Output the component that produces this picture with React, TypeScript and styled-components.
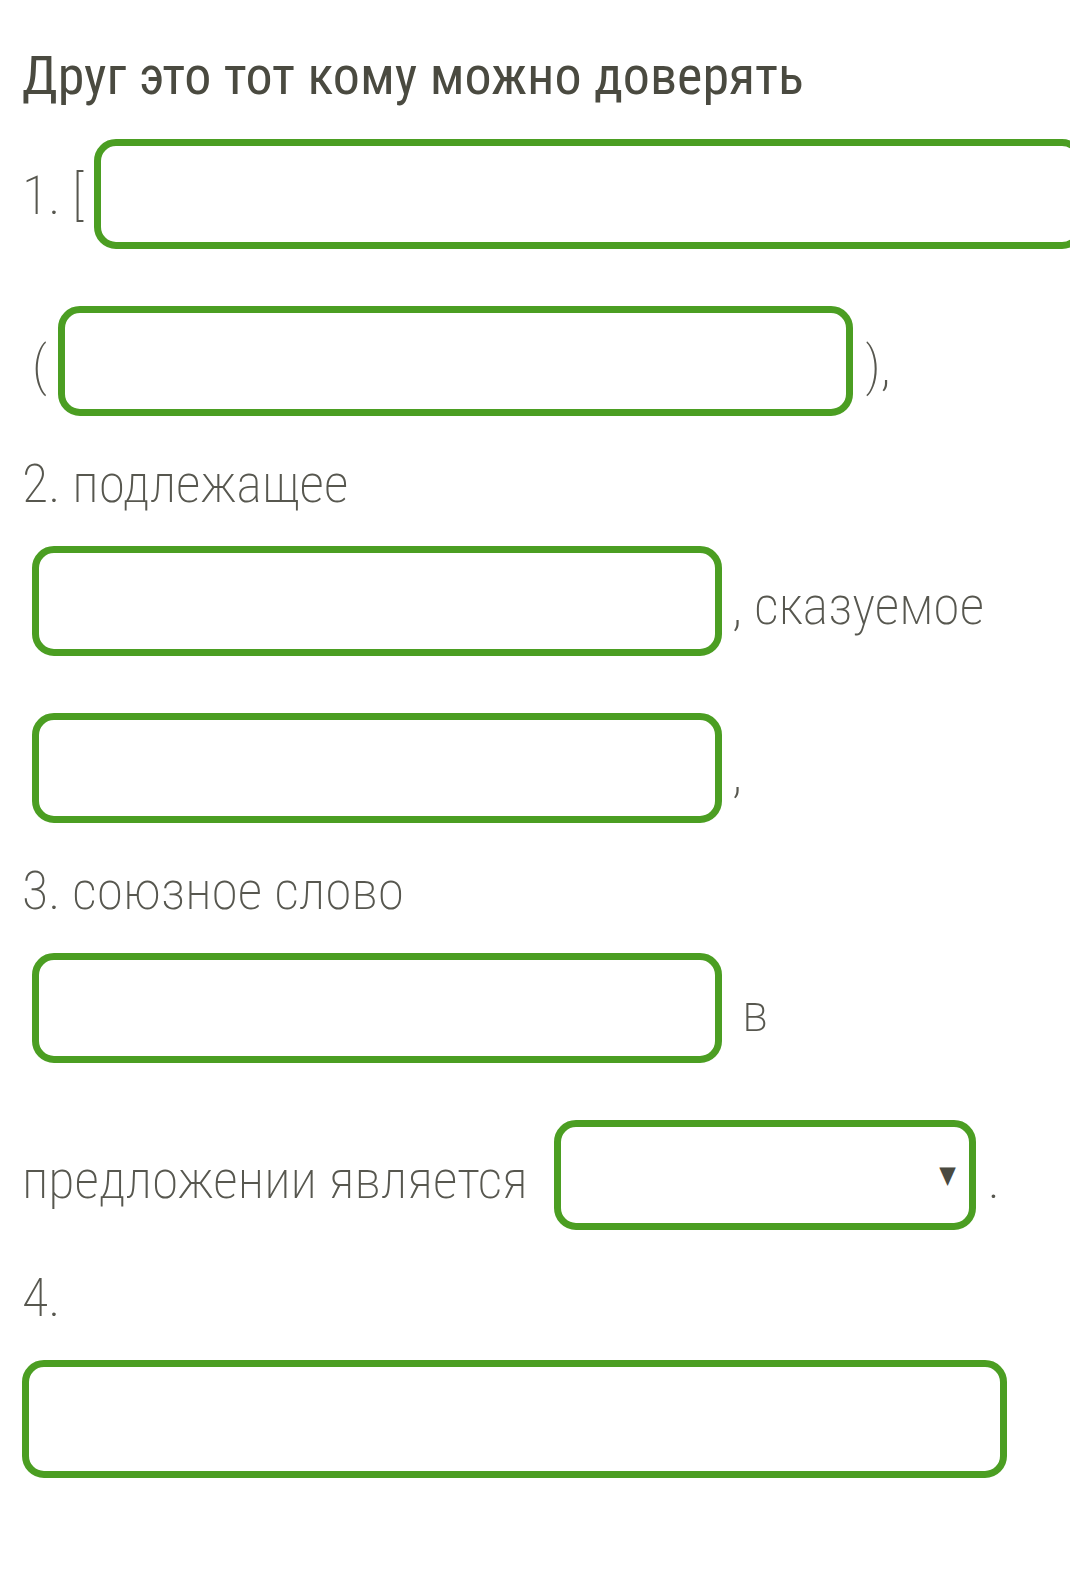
import styled, { createGlobalStyle } from "styled-components";

const GlobalStyle = createGlobalStyle`
    html, body {
        margin: 0;
        padding: 0;
        background: #ffffff;
        overflow-x: hidden;
    }
`;

const green = "#4b9e22";

const Page = styled.main`
    padding: 0 0 60px 22px;
    font-family: "Roboto Condensed", Roboto, "Liberation Sans", sans-serif;
    font-stretch: 80%;
    color: #57574f;
`;

const Title = styled.h1`
    margin: 49px 0 8px;
    font-size: 54px;
    line-height: 53px;
    font-weight: 440;
    color: #4a4a40;
`;

const FieldRow = styled.div`
    display: flex;
    align-items: center;
    height: 167px;
`;

const TextRow = styled.div`
    display: flex;
    align-items: flex-end;
    box-sizing: border-box;
    height: 73px;
    padding-bottom: 6px;
    font-size: 54px;
    font-weight: 220;
    line-height: 1;
`;

const Label = styled.span<{ $drop?: number; $gap?: number }>`
    flex-shrink: 0;
    font-size: 54px;
    font-weight: 220;
    line-height: 1;
    white-space: pre;
    padding-top: ${({ $drop }) => $drop ?? 10}px;
    margin-left: ${({ $gap }) => $gap ?? 0}px;
`;

const Field = styled.input<{ $w: number; $gap?: number; $h?: number; $shift?: number }>`
    flex-shrink: 0;
    box-sizing: border-box;
    width: ${({ $w }) => $w}px;
    height: ${({ $h }) => $h ?? 110}px;
    margin: ${({ $shift }) => $shift ?? 0}px 0 0 ${({ $gap }) => $gap ?? 0}px;
    padding: 0 24px;
    border: 7px solid ${green};
    border-radius: 22px;
    background: #ffffff;
    font: inherit;
    font-size: 40px;
    outline: none;
`;

const Select = styled.div<{ $w: number; $gap?: number }>`
    flex-shrink: 0;
    box-sizing: border-box;
    display: flex;
    align-items: center;
    justify-content: flex-end;
    width: ${({ $w }) => $w}px;
    height: 110px;
    margin-left: ${({ $gap }) => $gap ?? 0}px;
    padding-right: 13px;
    border: 7px solid ${green};
    border-radius: 22px;
`;

const Caret = styled.span`
    font-family: "DejaVu Sans", sans-serif;
    font-size: 24px;
    line-height: 1;
    color: #4a4a40;
`;

export default function App() {
    return (
        <>
            <GlobalStyle />
            <Page>
                <Title>Друг это тот кому можно доверять</Title>

                <FieldRow>
                    <Label $drop={4}>1. [</Label>
                    <Field $w={990} $gap={10} />
                </FieldRow>
                <FieldRow>
                    <Label $gap={10}>(</Label>
                    <Field $w={795} $gap={11} />
                    <Label $gap={12}>),</Label>
                </FieldRow>

                <TextRow>2. подлежащее</TextRow>
                <FieldRow>
                    <Field $w={690} $gap={10} />
                    <Label $gap={10}>, сказуемое</Label>
                </FieldRow>
                <FieldRow>
                    <Field $w={690} $gap={10} />
                    <Label $gap={10}>,</Label>
                </FieldRow>

                <TextRow>3. союзное слово</TextRow>
                <FieldRow>
                    <Field $w={690} $gap={10} />
                    <Label $gap={20}>в</Label>
                </FieldRow>
                <FieldRow>
                    <Label>предложении является</Label>
                    <Select $w={422} $gap={26}>
                        <Caret>▼</Caret>
                    </Select>
                    <Label $gap={12}>.</Label>
                </FieldRow>

                <TextRow>4.</TextRow>
                <FieldRow>
                    <Field $w={985} $h={118} $shift={8} />
                </FieldRow>
            </Page>
        </>
    );
}
